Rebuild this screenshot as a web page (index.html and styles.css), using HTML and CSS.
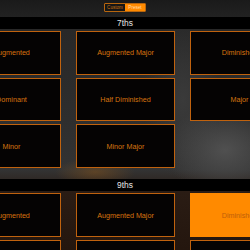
FILE: index.html
```html
<!DOCTYPE html>
<html>
<head>
<meta charset="utf-8">
<link rel="stylesheet" href="styles.css">
</head>
<body>
<div class="page">
  <div class="topbar">
    <div class="segmented">
      <span class="seg">Custom</span>
      <span class="seg active">Preset</span>
    </div>
  </div>
  <div class="section-header">7ths</div>
  <div class="grid">
    <div class="card">Augmented</div>
    <div class="card">Augmented Major</div>
    <div class="card">Diminished</div>
    <div class="card">Dominant</div>
    <div class="card">Half Diminished</div>
    <div class="card">Major</div>
    <div class="card">Minor</div>
    <div class="card">Minor Major</div>
    <div class="card empty"></div>
  </div>
  <div class="section-header second">9ths</div>
  <div class="grid nines">
    <div class="card">Augmented</div>
    <div class="card">Augmented Major</div>
    <div class="card selected">Diminished</div>
    <div class="card"></div>
    <div class="card"></div>
    <div class="card"></div>
  </div>
</div>
</body>
</html>
```

FILE: styles.css
```css
html, body {
  margin: 0;
  padding: 0;
  width: 250px;
  height: 250px;
  overflow: hidden;
  background: #2c2c2c;
  font-family: "Liberation Sans", Arial, sans-serif;
}

.page {
  width: 250px;
  height: 250px;
  overflow: hidden;
  background:
    radial-gradient(ellipse 40px 14px at 95px 172px, rgba(170, 100, 20, 0.35), rgba(0,0,0,0) 100%),
    radial-gradient(ellipse 60px 45px at 225px 150px, #505050, rgba(80,80,80,0) 100%),
    radial-gradient(ellipse 40px 80px at 183px 100px, #3a3a3a, rgba(58,58,58,0) 100%),
    linear-gradient(to bottom, #262626 0px, #2e2e2e 120px, #333333 170px, #2a1c14 192px, #24160e 250px);
}

.topbar {
  height: 17px;
  display: flex;
  justify-content: center;
  align-items: flex-start;
  background: linear-gradient(to bottom, #1a1a1a, #222222);
}

.segmented {
  margin-top: 3px;
  display: flex;
  height: 9px;
  border: 1px solid #b8660e;
  border-radius: 1px;
  box-sizing: border-box;
  overflow: hidden;
}

.seg {
  width: 20px;
  display: flex;
  align-items: center;
  justify-content: center;
  font-size: 4.6px;
  color: #c8700f;
  background: #161616;
}

.seg.active {
  background: #ff8a00;
  color: #ffd9a8;
}

.section-header {
  height: 11.7px;
  background: #000;
  color: #e6e6e6;
  font-size: 8.4px;
  display: flex;
  align-items: center;
  justify-content: center;
}

.section-header.second {
  margin-top: 11.3px;
}

.grid {
  margin-top: 2.3px;
  margin-left: -38px;
  display: grid;
  grid-template-columns: 99px 99px 99px;
  grid-auto-rows: 43.67px;
  column-gap: 15px;
  row-gap: 3px;
}

.card {
  background: #050303;
  border: 1.5px solid #c0620e;
  box-sizing: border-box;
  display: flex;
  align-items: center;
  justify-content: center;
  color: #d8740f;
  font-size: 7.2px;
  white-space: nowrap;
}

.card.empty {
  visibility: hidden;
}

.card.selected {
  background: #ff8a00;
  border-color: #ff8a00;
  color: #c0600a;
}
```
